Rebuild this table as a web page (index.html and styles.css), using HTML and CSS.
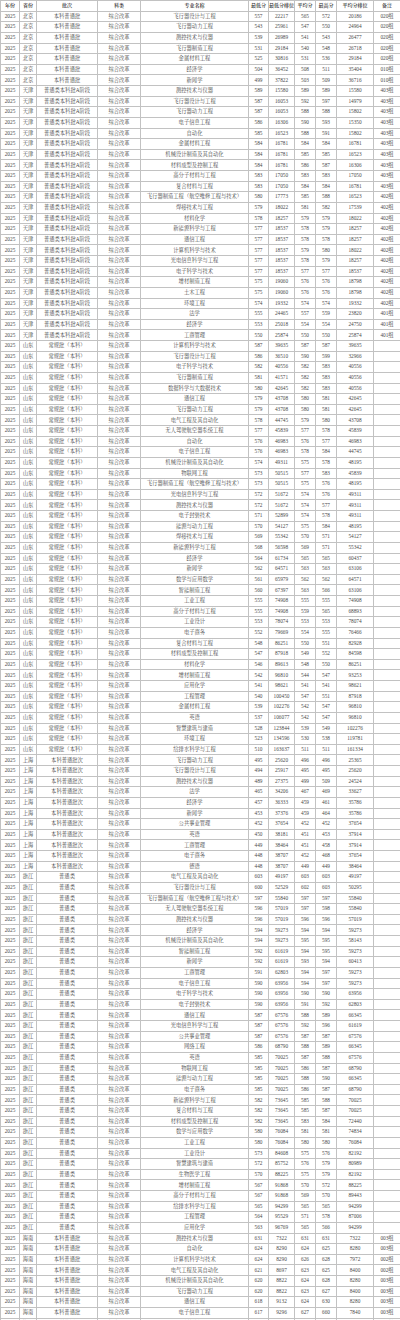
FILE: index.html
```html
<!DOCTYPE html>
<html lang="zh-CN">
<head>
<meta charset="utf-8">
<title>录取分数</title>
<link rel="stylesheet" href="styles.css">
</head>
<body>
<table class="tbl">
<colgroup>
<col class="c1"><col class="c2"><col class="c3"><col class="c4"><col class="c5"><col class="c6"><col class="c7"><col class="c8"><col class="c9"><col class="c10"><col class="c11">
</colgroup>
<thead>
<tr><th>年份</th><th>省份</th><th>批次</th><th>科类</th><th>专业名称</th><th>最低分</th><th>最低分排位</th><th>平均分</th><th>最高分</th><th>平均分排位</th><th>备注</th></tr>
</thead>
<tbody>
<tr><td>2025</td><td>北京</td><td>本科普通批</td><td>综合改革</td><td>飞行器设计与工程</td><td>557</td><td>22217</td><td>565</td><td>572</td><td>20186</td><td>020组</td></tr>
<tr><td>2025</td><td>北京</td><td>本科普通批</td><td>综合改革</td><td>飞行器动力工程</td><td>543</td><td>25961</td><td>547</td><td>550</td><td>24964</td><td>020组</td></tr>
<tr><td>2025</td><td>北京</td><td>本科普通批</td><td>综合改革</td><td>测控技术与仪器</td><td>539</td><td>26989</td><td>541</td><td>543</td><td>26477</td><td>020组</td></tr>
<tr><td>2025</td><td>北京</td><td>本科普通批</td><td>综合改革</td><td>飞行器制造工程</td><td>531</td><td>29184</td><td>540</td><td>548</td><td>26718</td><td>020组</td></tr>
<tr><td>2025</td><td>北京</td><td>本科普通批</td><td>综合改革</td><td>金属材料工程</td><td>525</td><td>30816</td><td>531</td><td>536</td><td>29184</td><td>020组</td></tr>
<tr><td>2025</td><td>北京</td><td>本科普通批</td><td>综合改革</td><td>经济学</td><td>504</td><td>36452</td><td>508</td><td>511</td><td>35404</td><td>010组</td></tr>
<tr><td>2025</td><td>北京</td><td>本科普通批</td><td>综合改革</td><td>新闻学</td><td>499</td><td>37822</td><td>503</td><td>509</td><td>36716</td><td>010组</td></tr>
<tr><td>2025</td><td>天津</td><td>普通类本科批A阶段</td><td>综合改革</td><td>测控技术与仪器</td><td>589</td><td>15580</td><td>589</td><td>589</td><td>15580</td><td>403组</td></tr>
<tr><td>2025</td><td>天津</td><td>普通类本科批A阶段</td><td>综合改革</td><td>飞行器设计与工程</td><td>587</td><td>16053</td><td>592</td><td>597</td><td>14979</td><td>403组</td></tr>
<tr><td>2025</td><td>天津</td><td>普通类本科批A阶段</td><td>综合改革</td><td>飞行器动力工程</td><td>587</td><td>16053</td><td>588</td><td>588</td><td>15802</td><td>403组</td></tr>
<tr><td>2025</td><td>天津</td><td>普通类本科批A阶段</td><td>综合改革</td><td>电子信息工程</td><td>586</td><td>16306</td><td>590</td><td>593</td><td>15350</td><td>403组</td></tr>
<tr><td>2025</td><td>天津</td><td>普通类本科批A阶段</td><td>综合改革</td><td>自动化</td><td>585</td><td>16523</td><td>588</td><td>591</td><td>15802</td><td>403组</td></tr>
<tr><td>2025</td><td>天津</td><td>普通类本科批A阶段</td><td>综合改革</td><td>金属材料工程</td><td>584</td><td>16781</td><td>584</td><td>584</td><td>16781</td><td>403组</td></tr>
<tr><td>2025</td><td>天津</td><td>普通类本科批A阶段</td><td>综合改革</td><td>机械设计制造及其自动化</td><td>584</td><td>16781</td><td>585</td><td>585</td><td>16523</td><td>403组</td></tr>
<tr><td>2025</td><td>天津</td><td>普通类本科批A阶段</td><td>综合改革</td><td>材料成型及控制工程</td><td>584</td><td>16781</td><td>586</td><td>587</td><td>16306</td><td>403组</td></tr>
<tr><td>2025</td><td>天津</td><td>普通类本科批A阶段</td><td>综合改革</td><td>高分子材料与工程</td><td>583</td><td>17050</td><td>583</td><td>583</td><td>17050</td><td>403组</td></tr>
<tr><td>2025</td><td>天津</td><td>普通类本科批A阶段</td><td>综合改革</td><td>复合材料与工程</td><td>583</td><td>17050</td><td>584</td><td>584</td><td>16781</td><td>403组</td></tr>
<tr><td>2025</td><td>天津</td><td>普通类本科批A阶段</td><td>综合改革</td><td>飞行器制造工程（航空维修工程与技术）</td><td>580</td><td>17773</td><td>585</td><td>588</td><td>16523</td><td>402组</td></tr>
<tr><td>2025</td><td>天津</td><td>普通类本科批A阶段</td><td>综合改革</td><td>焊接技术与工程</td><td>579</td><td>18022</td><td>581</td><td>582</td><td>17539</td><td>402组</td></tr>
<tr><td>2025</td><td>天津</td><td>普通类本科批A阶段</td><td>综合改革</td><td>材料化学</td><td>578</td><td>18257</td><td>579</td><td>579</td><td>18022</td><td>402组</td></tr>
<tr><td>2025</td><td>天津</td><td>普通类本科批A阶段</td><td>综合改革</td><td>新能源科学与工程</td><td>577</td><td>18537</td><td>578</td><td>579</td><td>18257</td><td>402组</td></tr>
<tr><td>2025</td><td>天津</td><td>普通类本科批A阶段</td><td>综合改革</td><td>通信工程</td><td>577</td><td>18537</td><td>578</td><td>578</td><td>18257</td><td>402组</td></tr>
<tr><td>2025</td><td>天津</td><td>普通类本科批A阶段</td><td>综合改革</td><td>计算机科学与技术</td><td>577</td><td>18537</td><td>579</td><td>580</td><td>18022</td><td>402组</td></tr>
<tr><td>2025</td><td>天津</td><td>普通类本科批A阶段</td><td>综合改革</td><td>光电信息科学与工程</td><td>577</td><td>18537</td><td>578</td><td>579</td><td>18257</td><td>402组</td></tr>
<tr><td>2025</td><td>天津</td><td>普通类本科批A阶段</td><td>综合改革</td><td>电子科学与技术</td><td>577</td><td>18537</td><td>577</td><td>577</td><td>18537</td><td>402组</td></tr>
<tr><td>2025</td><td>天津</td><td>普通类本科批A阶段</td><td>综合改革</td><td>增材制造工程</td><td>575</td><td>19060</td><td>576</td><td>576</td><td>18798</td><td>402组</td></tr>
<tr><td>2025</td><td>天津</td><td>普通类本科批A阶段</td><td>综合改革</td><td>土木工程</td><td>575</td><td>19060</td><td>576</td><td>576</td><td>18798</td><td>402组</td></tr>
<tr><td>2025</td><td>天津</td><td>普通类本科批A阶段</td><td>综合改革</td><td>环境工程</td><td>574</td><td>19332</td><td>574</td><td>574</td><td>19332</td><td>402组</td></tr>
<tr><td>2025</td><td>天津</td><td>普通类本科批A阶段</td><td>综合改革</td><td>法学</td><td>555</td><td>24465</td><td>557</td><td>559</td><td>23820</td><td>401组</td></tr>
<tr><td>2025</td><td>天津</td><td>普通类本科批A阶段</td><td>综合改革</td><td>经济学</td><td>553</td><td>25018</td><td>554</td><td>554</td><td>24750</td><td>401组</td></tr>
<tr><td>2025</td><td>天津</td><td>普通类本科批A阶段</td><td>综合改革</td><td>工商管理</td><td>550</td><td>25874</td><td>550</td><td>550</td><td>25874</td><td>401组</td></tr>
<tr><td>2025</td><td>山东</td><td>常规批（本科）</td><td>综合改革</td><td>计算机科学与技术</td><td>587</td><td>39635</td><td>587</td><td>587</td><td>39635</td><td></td></tr>
<tr><td>2025</td><td>山东</td><td>常规批（本科）</td><td>综合改革</td><td>飞行器设计与工程</td><td>586</td><td>36510</td><td>590</td><td>599</td><td>32966</td><td></td></tr>
<tr><td>2025</td><td>山东</td><td>常规批（本科）</td><td>综合改革</td><td>电子科学与技术</td><td>582</td><td>40556</td><td>582</td><td>583</td><td>40556</td><td></td></tr>
<tr><td>2025</td><td>山东</td><td>常规批（本科）</td><td>综合改革</td><td>飞行器制造工程</td><td>581</td><td>41571</td><td>582</td><td>583</td><td>40556</td><td></td></tr>
<tr><td>2025</td><td>山东</td><td>常规批（本科）</td><td>综合改革</td><td>数据科学与大数据技术</td><td>580</td><td>42645</td><td>582</td><td>583</td><td>40556</td><td></td></tr>
<tr><td>2025</td><td>山东</td><td>常规批（本科）</td><td>综合改革</td><td>通信工程</td><td>579</td><td>43708</td><td>580</td><td>581</td><td>42645</td><td></td></tr>
<tr><td>2025</td><td>山东</td><td>常规批（本科）</td><td>综合改革</td><td>飞行器动力工程</td><td>579</td><td>43708</td><td>580</td><td>581</td><td>42645</td><td></td></tr>
<tr><td>2025</td><td>山东</td><td>常规批（本科）</td><td>综合改革</td><td>电气工程及其自动化</td><td>578</td><td>44745</td><td>579</td><td>580</td><td>43708</td><td></td></tr>
<tr><td>2025</td><td>山东</td><td>常规批（本科）</td><td>综合改革</td><td>无人驾驶航空器系统工程</td><td>577</td><td>45839</td><td>577</td><td>578</td><td>45839</td><td></td></tr>
<tr><td>2025</td><td>山东</td><td>常规批（本科）</td><td>综合改革</td><td>自动化</td><td>576</td><td>46983</td><td>576</td><td>577</td><td>46983</td><td></td></tr>
<tr><td>2025</td><td>山东</td><td>常规批（本科）</td><td>综合改革</td><td>电子信息工程</td><td>576</td><td>46983</td><td>578</td><td>584</td><td>44745</td><td></td></tr>
<tr><td>2025</td><td>山东</td><td>常规批（本科）</td><td>综合改革</td><td>机械设计制造及其自动化</td><td>574</td><td>49311</td><td>575</td><td>578</td><td>48195</td><td></td></tr>
<tr><td>2025</td><td>山东</td><td>常规批（本科）</td><td>综合改革</td><td>物联网工程</td><td>573</td><td>50515</td><td>577</td><td>583</td><td>45839</td><td></td></tr>
<tr><td>2025</td><td>山东</td><td>常规批（本科）</td><td>综合改革</td><td>飞行器制造工程（航空维修工程与技术）</td><td>573</td><td>50515</td><td>575</td><td>576</td><td>48195</td><td></td></tr>
<tr><td>2025</td><td>山东</td><td>常规批（本科）</td><td>综合改革</td><td>光电信息科学与工程</td><td>572</td><td>51672</td><td>574</td><td>576</td><td>49311</td><td></td></tr>
<tr><td>2025</td><td>山东</td><td>常规批（本科）</td><td>综合改革</td><td>测控技术与仪器</td><td>572</td><td>51672</td><td>574</td><td>577</td><td>49311</td><td></td></tr>
<tr><td>2025</td><td>山东</td><td>常规批（本科）</td><td>综合改革</td><td>电子封装技术</td><td>571</td><td>52899</td><td>574</td><td>578</td><td>49311</td><td></td></tr>
<tr><td>2025</td><td>山东</td><td>常规批（本科）</td><td>综合改革</td><td>能源与动力工程</td><td>570</td><td>54127</td><td>575</td><td>584</td><td>48195</td><td></td></tr>
<tr><td>2025</td><td>山东</td><td>常规批（本科）</td><td>综合改革</td><td>焊接技术与工程</td><td>569</td><td>55342</td><td>570</td><td>571</td><td>54127</td><td></td></tr>
<tr><td>2025</td><td>山东</td><td>常规批（本科）</td><td>综合改革</td><td>新能源科学与工程</td><td>568</td><td>56598</td><td>569</td><td>571</td><td>55342</td><td></td></tr>
<tr><td>2025</td><td>山东</td><td>常规批（本科）</td><td>综合改革</td><td>经济学</td><td>564</td><td>61734</td><td>565</td><td>565</td><td>60437</td><td></td></tr>
<tr><td>2025</td><td>山东</td><td>常规批（本科）</td><td>综合改革</td><td>新闻学</td><td>562</td><td>64571</td><td>563</td><td>563</td><td>63106</td><td></td></tr>
<tr><td>2025</td><td>山东</td><td>常规批（本科）</td><td>综合改革</td><td>数学与应用数学</td><td>561</td><td>65979</td><td>562</td><td>562</td><td>64571</td><td></td></tr>
<tr><td>2025</td><td>山东</td><td>常规批（本科）</td><td>综合改革</td><td>智能制造工程</td><td>560</td><td>67397</td><td>563</td><td>566</td><td>63106</td><td></td></tr>
<tr><td>2025</td><td>山东</td><td>常规批（本科）</td><td>综合改革</td><td>工业工程</td><td>555</td><td>74908</td><td>555</td><td>555</td><td>74908</td><td></td></tr>
<tr><td>2025</td><td>山东</td><td>常规批（本科）</td><td>综合改革</td><td>高分子材料与工程</td><td>555</td><td>74908</td><td>559</td><td>565</td><td>68893</td><td></td></tr>
<tr><td>2025</td><td>山东</td><td>常规批（本科）</td><td>综合改革</td><td>工业设计</td><td>553</td><td>78074</td><td>553</td><td>553</td><td>78074</td><td></td></tr>
<tr><td>2025</td><td>山东</td><td>常规批（本科）</td><td>综合改革</td><td>电子商务</td><td>552</td><td>79669</td><td>554</td><td>555</td><td>76466</td><td></td></tr>
<tr><td>2025</td><td>山东</td><td>常规批（本科）</td><td>综合改革</td><td>复合材料与工程</td><td>548</td><td>86251</td><td>550</td><td>551</td><td>82928</td><td></td></tr>
<tr><td>2025</td><td>山东</td><td>常规批（本科）</td><td>综合改革</td><td>材料成型及控制工程</td><td>547</td><td>87918</td><td>549</td><td>552</td><td>84598</td><td></td></tr>
<tr><td>2025</td><td>山东</td><td>常规批（本科）</td><td>综合改革</td><td>材料化学</td><td>546</td><td>89613</td><td>548</td><td>550</td><td>86251</td><td></td></tr>
<tr><td>2025</td><td>山东</td><td>常规批（本科）</td><td>综合改革</td><td>增材制造工程</td><td>542</td><td>96810</td><td>544</td><td>547</td><td>93253</td><td></td></tr>
<tr><td>2025</td><td>山东</td><td>常规批（本科）</td><td>综合改革</td><td>应用化学</td><td>541</td><td>98621</td><td>541</td><td>541</td><td>98621</td><td></td></tr>
<tr><td>2025</td><td>山东</td><td>常规批（本科）</td><td>综合改革</td><td>工程管理</td><td>540</td><td>100450</td><td>547</td><td>551</td><td>87918</td><td></td></tr>
<tr><td>2025</td><td>山东</td><td>常规批（本科）</td><td>综合改革</td><td>金属材料工程</td><td>539</td><td>102276</td><td>542</td><td>547</td><td>96810</td><td></td></tr>
<tr><td>2025</td><td>山东</td><td>常规批（本科）</td><td>综合改革</td><td>英语</td><td>537</td><td>106077</td><td>542</td><td>547</td><td>96810</td><td></td></tr>
<tr><td>2025</td><td>山东</td><td>常规批（本科）</td><td>综合改革</td><td>智慧建筑与建造</td><td>528</td><td>123844</td><td>539</td><td>549</td><td>102276</td><td></td></tr>
<tr><td>2025</td><td>山东</td><td>常规批（本科）</td><td>综合改革</td><td>环境工程</td><td>523</td><td>134596</td><td>530</td><td>538</td><td>119781</td><td></td></tr>
<tr><td>2025</td><td>山东</td><td>常规批（本科）</td><td>综合改革</td><td>给排水科学与工程</td><td>510</td><td>163637</td><td>511</td><td>511</td><td>161334</td><td></td></tr>
<tr><td>2025</td><td>上海</td><td>本科普通批次</td><td>综合改革</td><td>飞行器动力工程</td><td>495</td><td>25620</td><td>496</td><td>496</td><td>25365</td><td></td></tr>
<tr><td>2025</td><td>上海</td><td>本科普通批次</td><td>综合改革</td><td>飞行器设计与工程</td><td>494</td><td>25917</td><td>495</td><td>495</td><td>25620</td><td></td></tr>
<tr><td>2025</td><td>上海</td><td>本科普通批次</td><td>综合改革</td><td>测控技术与仪器</td><td>489</td><td>27375</td><td>499</td><td>509</td><td>24524</td><td></td></tr>
<tr><td>2025</td><td>上海</td><td>本科普通批次</td><td>综合改革</td><td>法学</td><td>465</td><td>34206</td><td>467</td><td>469</td><td>33627</td><td></td></tr>
<tr><td>2025</td><td>上海</td><td>本科普通批次</td><td>综合改革</td><td>经济学</td><td>457</td><td>36333</td><td>459</td><td>461</td><td>35786</td><td></td></tr>
<tr><td>2025</td><td>上海</td><td>本科普通批次</td><td>综合改革</td><td>新闻学</td><td>453</td><td>37376</td><td>459</td><td>464</td><td>35786</td><td></td></tr>
<tr><td>2025</td><td>上海</td><td>本科普通批次</td><td>综合改革</td><td>公共事业管理</td><td>452</td><td>37654</td><td>452</td><td>452</td><td>37654</td><td></td></tr>
<tr><td>2025</td><td>上海</td><td>本科普通批次</td><td>综合改革</td><td>英语</td><td>450</td><td>38181</td><td>451</td><td>453</td><td>37914</td><td></td></tr>
<tr><td>2025</td><td>上海</td><td>本科普通批次</td><td>综合改革</td><td>工商管理</td><td>449</td><td>38464</td><td>451</td><td>458</td><td>37914</td><td></td></tr>
<tr><td>2025</td><td>上海</td><td>本科普通批次</td><td>综合改革</td><td>电子商务</td><td>448</td><td>38707</td><td>452</td><td>468</td><td>37654</td><td></td></tr>
<tr><td>2025</td><td>上海</td><td>本科普通批次</td><td>综合改革</td><td>德语</td><td>448</td><td>38707</td><td>449</td><td>449</td><td>38464</td><td></td></tr>
<tr><td>2025</td><td>浙江</td><td>普通类</td><td>综合改革</td><td>电气工程及其自动化</td><td>603</td><td>49197</td><td>603</td><td>603</td><td>49197</td><td></td></tr>
<tr><td>2025</td><td>浙江</td><td>普通类</td><td>综合改革</td><td>飞行器设计与工程</td><td>600</td><td>52529</td><td>602</td><td>603</td><td>50295</td><td></td></tr>
<tr><td>2025</td><td>浙江</td><td>普通类</td><td>综合改革</td><td>飞行器制造工程（航空维修工程与技术）</td><td>597</td><td>55840</td><td>597</td><td>597</td><td>55840</td><td></td></tr>
<tr><td>2025</td><td>浙江</td><td>普通类</td><td>综合改革</td><td>无人驾驶航空器系统工程</td><td>596</td><td>57019</td><td>597</td><td>598</td><td>55840</td><td></td></tr>
<tr><td>2025</td><td>浙江</td><td>普通类</td><td>综合改革</td><td>测控技术与仪器</td><td>596</td><td>57019</td><td>596</td><td>596</td><td>57019</td><td></td></tr>
<tr><td>2025</td><td>浙江</td><td>普通类</td><td>综合改革</td><td>经济学</td><td>594</td><td>59273</td><td>594</td><td>594</td><td>59273</td><td></td></tr>
<tr><td>2025</td><td>浙江</td><td>普通类</td><td>综合改革</td><td>机械设计制造及其自动化</td><td>594</td><td>59273</td><td>595</td><td>595</td><td>58143</td><td></td></tr>
<tr><td>2025</td><td>浙江</td><td>普通类</td><td>综合改革</td><td>智能制造工程</td><td>592</td><td>61619</td><td>594</td><td>595</td><td>59273</td><td></td></tr>
<tr><td>2025</td><td>浙江</td><td>普通类</td><td>综合改革</td><td>新闻学</td><td>592</td><td>61619</td><td>593</td><td>594</td><td>60413</td><td></td></tr>
<tr><td>2025</td><td>浙江</td><td>普通类</td><td>综合改革</td><td>工商管理</td><td>591</td><td>62803</td><td>594</td><td>597</td><td>59273</td><td></td></tr>
<tr><td>2025</td><td>浙江</td><td>普通类</td><td>综合改革</td><td>电子信息工程</td><td>590</td><td>63956</td><td>594</td><td>597</td><td>59273</td><td></td></tr>
<tr><td>2025</td><td>浙江</td><td>普通类</td><td>综合改革</td><td>电子科学与技术</td><td>590</td><td>63956</td><td>590</td><td>590</td><td>63956</td><td></td></tr>
<tr><td>2025</td><td>浙江</td><td>普通类</td><td>综合改革</td><td>电子封装技术</td><td>590</td><td>63956</td><td>591</td><td>592</td><td>62803</td><td></td></tr>
<tr><td>2025</td><td>浙江</td><td>普通类</td><td>综合改革</td><td>通信工程</td><td>587</td><td>67576</td><td>588</td><td>589</td><td>66345</td><td></td></tr>
<tr><td>2025</td><td>浙江</td><td>普通类</td><td>综合改革</td><td>光电信息科学与工程</td><td>587</td><td>67576</td><td>592</td><td>596</td><td>61619</td><td></td></tr>
<tr><td>2025</td><td>浙江</td><td>普通类</td><td>综合改革</td><td>公共事业管理</td><td>587</td><td>67576</td><td>587</td><td>587</td><td>67576</td><td></td></tr>
<tr><td>2025</td><td>浙江</td><td>普通类</td><td>综合改革</td><td>网络工程</td><td>586</td><td>68790</td><td>588</td><td>589</td><td>66345</td><td></td></tr>
<tr><td>2025</td><td>浙江</td><td>普通类</td><td>综合改革</td><td>英语</td><td>585</td><td>70025</td><td>587</td><td>588</td><td>67576</td><td></td></tr>
<tr><td>2025</td><td>浙江</td><td>普通类</td><td>综合改革</td><td>物联网工程</td><td>585</td><td>70025</td><td>586</td><td>587</td><td>68790</td><td></td></tr>
<tr><td>2025</td><td>浙江</td><td>普通类</td><td>综合改革</td><td>能源与动力工程</td><td>585</td><td>70025</td><td>588</td><td>590</td><td>66345</td><td></td></tr>
<tr><td>2025</td><td>浙江</td><td>普通类</td><td>综合改革</td><td>电子商务</td><td>585</td><td>70025</td><td>586</td><td>587</td><td>68790</td><td></td></tr>
<tr><td>2025</td><td>浙江</td><td>普通类</td><td>综合改革</td><td>新能源科学与工程</td><td>582</td><td>73645</td><td>585</td><td>588</td><td>70025</td><td></td></tr>
<tr><td>2025</td><td>浙江</td><td>普通类</td><td>综合改革</td><td>复合材料与工程</td><td>582</td><td>73645</td><td>585</td><td>587</td><td>70025</td><td></td></tr>
<tr><td>2025</td><td>浙江</td><td>普通类</td><td>综合改革</td><td>材料成型及控制工程</td><td>582</td><td>73645</td><td>583</td><td>584</td><td>72440</td><td></td></tr>
<tr><td>2025</td><td>浙江</td><td>普通类</td><td>综合改革</td><td>数学与应用数学</td><td>580</td><td>76084</td><td>581</td><td>581</td><td>74834</td><td></td></tr>
<tr><td>2025</td><td>浙江</td><td>普通类</td><td>综合改革</td><td>工业工程</td><td>580</td><td>76084</td><td>580</td><td>580</td><td>76084</td><td></td></tr>
<tr><td>2025</td><td>浙江</td><td>普通类</td><td>综合改革</td><td>工业设计</td><td>573</td><td>84608</td><td>575</td><td>576</td><td>82192</td><td></td></tr>
<tr><td>2025</td><td>浙江</td><td>普通类</td><td>综合改革</td><td>智慧建筑与建造</td><td>572</td><td>85752</td><td>576</td><td>579</td><td>80989</td><td></td></tr>
<tr><td>2025</td><td>浙江</td><td>普通类</td><td>综合改革</td><td>生物医学工程</td><td>570</td><td>88225</td><td>575</td><td>579</td><td>82192</td><td></td></tr>
<tr><td>2025</td><td>浙江</td><td>普通类</td><td>综合改革</td><td>增材制造工程</td><td>567</td><td>91868</td><td>570</td><td>572</td><td>88225</td><td></td></tr>
<tr><td>2025</td><td>浙江</td><td>普通类</td><td>综合改革</td><td>高分子材料与工程</td><td>567</td><td>91868</td><td>569</td><td>570</td><td>89443</td><td></td></tr>
<tr><td>2025</td><td>浙江</td><td>普通类</td><td>综合改革</td><td>给排水科学与工程</td><td>565</td><td>94299</td><td>565</td><td>565</td><td>94299</td><td></td></tr>
<tr><td>2025</td><td>浙江</td><td>普通类</td><td>综合改革</td><td>工程管理</td><td>564</td><td>95529</td><td>571</td><td>578</td><td>87006</td><td></td></tr>
<tr><td>2025</td><td>浙江</td><td>普通类</td><td>综合改革</td><td>应用化学</td><td>563</td><td>96769</td><td>565</td><td>566</td><td>94299</td><td></td></tr>
<tr><td>2025</td><td>海南</td><td>本科普通批</td><td>综合改革</td><td>测控技术与仪器</td><td>631</td><td>7322</td><td>631</td><td>631</td><td>7322</td><td>003组</td></tr>
<tr><td>2025</td><td>海南</td><td>本科普通批</td><td>综合改革</td><td>自动化</td><td>624</td><td>8290</td><td>624</td><td>625</td><td>8280</td><td>003组</td></tr>
<tr><td>2025</td><td>海南</td><td>本科普通批</td><td>综合改革</td><td>计算机科学与技术</td><td>624</td><td>8290</td><td>626</td><td>628</td><td>7972</td><td>002组</td></tr>
<tr><td>2025</td><td>海南</td><td>本科普通批</td><td>综合改革</td><td>电气工程及其自动化</td><td>621</td><td>8697</td><td>623</td><td>625</td><td>8400</td><td>002组</td></tr>
<tr><td>2025</td><td>海南</td><td>本科普通批</td><td>综合改革</td><td>机械设计制造及其自动化</td><td>620</td><td>8822</td><td>624</td><td>628</td><td>8280</td><td>003组</td></tr>
<tr><td>2025</td><td>海南</td><td>本科普通批</td><td>综合改革</td><td>飞行器动力工程</td><td>620</td><td>8822</td><td>623</td><td>627</td><td>8400</td><td>003组</td></tr>
<tr><td>2025</td><td>海南</td><td>本科普通批</td><td>综合改革</td><td>通信工程</td><td>618</td><td>9132</td><td>624</td><td>630</td><td>8280</td><td>003组</td></tr>
<tr><td>2025</td><td>海南</td><td>本科普通批</td><td>综合改革</td><td>电子信息工程</td><td>617</td><td>9296</td><td>627</td><td>660</td><td>7840</td><td>003组</td></tr>
<tr><td>2025</td><td>海南</td><td>本科普通批</td><td>综合改革</td><td>电子科学与技术</td><td>616</td><td>9421</td><td>620</td><td>624</td><td>8822</td><td>003组</td></tr>
</tbody>
</table>
</body>
</html>
```

FILE: styles.css
```css
html, body {
  margin: 0;
  padding: 0;
  background: #ffffff;
}

body {
  font-family: "Liberation Serif", "Noto Serif CJK SC", "Noto Sans CJK SC", serif;
  color: #4a4a4a;
}

.tbl {
  width: 400px;
  border-collapse: collapse;
  table-layout: fixed;
  font-size: 5.3px;
}

.tbl .c1 { width: 19px; }
.tbl .c2 { width: 17px; }
.tbl .c3 { width: 61px; }
.tbl .c4 { width: 43px; }
.tbl .c5 { width: 108px; }
.tbl .c6 { width: 20px; }
.tbl .c7 { width: 26px; }
.tbl .c8 { width: 21px; }
.tbl .c9 { width: 21px; }
.tbl .c10 { width: 37px; }
.tbl .c11 { width: 27px; }

.tbl tr {
  height: 10.63px;
}

.tbl th,
.tbl td {
  border: 1px solid #c2c2c2;
  padding: 0;
  line-height: 1;
  text-align: center;
  vertical-align: middle;
  white-space: nowrap;
  overflow: hidden;
}

.tbl th {
  font-size: 5px;
  font-weight: 600;
  color: #2a2a2a;
}
```
